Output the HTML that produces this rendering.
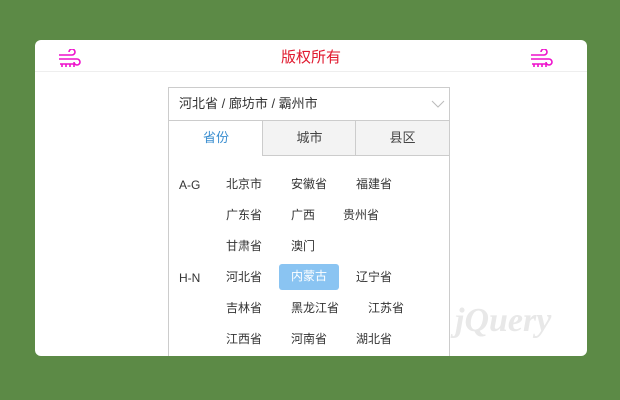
<!DOCTYPE html>
<html><head><meta charset="utf-8"><style>
*{margin:0;padding:0;box-sizing:border-box}
body{width:620px;height:400px;background:#5c8a46;font-family:"Liberation Sans","Noto Sans CJK SC",sans-serif;position:relative;overflow:hidden}
.card{position:absolute;left:35px;top:40px;width:552px;height:316px;background:#fff;border-radius:6px;overflow:hidden}
.hd{position:absolute;left:0;top:0;width:552px;height:32px;border-bottom:1px solid #eee}
.title{position:absolute;left:0;width:552px;top:6px;text-align:center;color:#e0192e;font-size:15px}
.ic{position:absolute;top:9px}
.box{position:absolute;left:133px;top:47px;width:282px;height:280px;border:1px solid #ccc;background:#fff}
.inp{height:33px;border-bottom:1px solid #ccc;font-size:13px;color:#333;padding:5px 0 0 10px}
.tabs{position:absolute;top:33px;left:0;width:280px;height:35px}
.tab{position:absolute;top:0;height:35px;background:#f3f3f3;border-bottom:1px solid #ccc;border-left:1px solid #ccc;text-align:center;font-size:13px;color:#444;line-height:33px}
.it{position:absolute;font-size:12px;color:#333;white-space:nowrap;margin-top:-3px}
.lb{position:absolute;font-size:12px;color:#333}
.hl{position:absolute;left:110px;top:176px;width:60px;height:26px;background:#8ac4f2;border-radius:3px;color:#fff;font-size:12px;text-align:center;line-height:24px}
</style></head><body>
<div class="card">
<div class="hd">
<svg class="ic" style="left:23px" width="24" height="20" viewBox="0 0 24 20" fill="none" stroke="#ee11cc" stroke-width="1.6"><path d="M1 6H14a3 3 0 1 0-3-3"/><path d="M1 10H19a3 3 0 1 1-3 3"/><path d="M2 15H17M4 15v3M8 15v3M12 15v3M16 15v3"/></svg>
<div class="title">版权所有</div>
<svg class="ic" style="left:495px" width="24" height="20" viewBox="0 0 24 20" fill="none" stroke="#ee11cc" stroke-width="1.6"><path d="M1 6H14a3 3 0 1 0-3-3"/><path d="M1 10H19a3 3 0 1 1-3 3"/><path d="M2 15H17M4 15v3M8 15v3M12 15v3M16 15v3"/></svg>
</div>
<div class="box">
<div class="inp">河北省 / 廊坊市 / 霸州市</div>
<svg style="position:absolute;left:262px;top:12px" width="14" height="8" viewBox="0 0 14 8" fill="none" stroke="#bbb"><path d="M1 1l6 6 6-6"/></svg>
<div class="tabs">
<div class="tab" style="left:0;width:94px;background:#fff;border:none;color:#3a8ed0">省份</div>
<div class="tab" style="left:93px;width:94px">城市</div>
<div class="tab" style="left:186px;width:94px">县区</div>
</div>
<div class="lb" style="left:10px;top:90px">A-G</div>
<div class="lb" style="left:10px;top:183px">H-N</div>
<div class="it" style="left:57px;top:90px">北京市</div><div class="it" style="left:122px;top:90px">安徽省</div><div class="it" style="left:187px;top:90px">福建省</div>
<div class="it" style="left:57px;top:121px">广东省</div><div class="it" style="left:122px;top:121px">广西</div><div class="it" style="left:174px;top:121px">贵州省</div>
<div class="it" style="left:57px;top:152px">甘肃省</div><div class="it" style="left:122px;top:152px">澳门</div>
<div class="it" style="left:57px;top:183px">河北省</div><div class="hl">内蒙古</div><div class="it" style="left:187px;top:183px">辽宁省</div>
<div class="it" style="left:57px;top:214px">吉林省</div><div class="it" style="left:122px;top:214px">黑龙江省</div><div class="it" style="left:199px;top:214px">江苏省</div>
<div class="it" style="left:57px;top:245px">江西省</div><div class="it" style="left:122px;top:245px">河南省</div><div class="it" style="left:187px;top:245px">湖北省</div>
</div>
<div style="position:absolute;left:420px;top:262px;font:italic bold 34px 'Liberation Serif',serif;color:#e8e8e8">jQuery</div>
</div>
</body></html>
